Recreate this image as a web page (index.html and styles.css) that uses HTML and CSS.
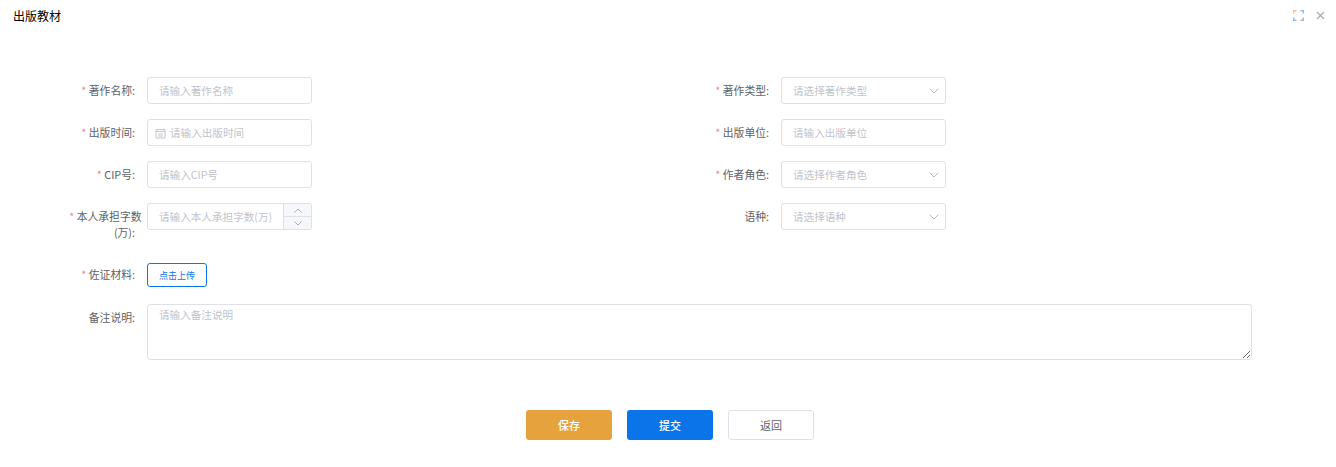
FILE: index.html
```html
<!DOCTYPE html>
<html lang="zh-CN">
<head>
<meta charset="utf-8">
<title>出版教材</title>
<link rel="stylesheet" href="styles.css">
</head>
<body>
<div class="dialog">
  <header class="head">
    <span class="title">出版教材</span>
    <div class="tools">
      <svg class="ico-full" viewBox="0 0 11 11" width="11" height="11" fill="none" stroke-width="1.4">
        <path d="M.7 3.500V.7h2.800" stroke="#f4c28c"/><path d="M7.500.7h2.800v2.800" stroke="#8fbdf0"/>
        <path d="M.7 7.500v2.800h2.800" stroke="#8fbdf0"/><path d="M7.500 10.300h2.800V7.500" stroke="#aeb4c2"/>
      </svg>
      <svg class="ico-close" viewBox="0 0 9 9" width="9" height="9" fill="none" stroke="#a9adb6" stroke-width="1.3"><path d="M1 1l7 7M8 1L1 8"/></svg>
    </div>
  </header>

  <form class="form">
    <div class="grid">
      <div class="item"><label class="lab"><i>*</i> 著作名称:</label><input class="ctl" placeholder="请输入著作名称"></div>
      <div class="item"><label class="lab"><i>*</i> 著作类型:</label>
        <div class="ctl select"><span>请选择著作类型</span><svg class="arrow" viewBox="0 0 10 6" width="10" height="6" fill="none" stroke="#b9bcc4"><path d="M.7.7L5 5l4.300-4.300"/></svg></div></div>

      <div class="item"><label class="lab"><i>*</i> 出版时间:</label>
        <div class="ctl date">
          <svg viewBox="0 0 11 11" width="11" height="11" fill="none" stroke="#c0c4cc"><path d="M1 1.500h9V10H1zM1 3.500h9M3 6h5M3 8h5"/></svg>
          <span>请输入出版时间</span></div></div>
      <div class="item"><label class="lab"><i>*</i> 出版单位:</label><input class="ctl" placeholder="请输入出版单位"></div>

      <div class="item"><label class="lab"><i>*</i> CIP号:</label><input class="ctl" placeholder="请输入CIP号"></div>
      <div class="item"><label class="lab"><i>*</i> 作者角色:</label>
        <div class="ctl select"><span>请选择作者角色</span><svg class="arrow" viewBox="0 0 10 6" width="10" height="6" fill="none" stroke="#b9bcc4"><path d="M.7.7L5 5l4.300-4.300"/></svg></div></div>

      <div class="item tall"><label class="lab"><span class="over"><i>*</i> 本人承担字数</span><span class="rest">(万):</span></label>
        <div class="ctl number"><input class="num-in" placeholder="请输入本人承担字数(万)">
          <div class="steps">
            <span><svg viewBox="0 0 8 5" width="8" height="5" fill="none" stroke="#a9adb6"><path d="M.5 4.500L4 1l3.500 3.500"/></svg></span>
            <span><svg viewBox="0 0 8 5" width="8" height="5" fill="none" stroke="#a9adb6"><path d="M.5.5L4 4 7.500.5"/></svg></span>
          </div></div></div>
      <div class="item tall"><label class="lab lab-one">语种:</label>
        <div class="ctl select"><span>请选择语种</span><svg class="arrow" viewBox="0 0 10 6" width="10" height="6" fill="none" stroke="#b9bcc4"><path d="M.7.7L5 5l4.300-4.300"/></svg></div></div>
    </div>

    <div class="item upload"><label class="lab"><i>*</i> 佐证材料:</label><button type="button" class="up-btn">点击上传</button></div>
    <div class="item note"><label class="lab">备注说明:</label><textarea class="area" placeholder="请输入备注说明"></textarea></div>

    <div class="actions">
      <button type="button" class="btn save">保存</button>
      <button type="button" class="btn submit">提交</button>
      <button type="button" class="btn back">返回</button>
    </div>
  </form>
</div>
</body>
</html>
```
FILE: styles.css
```css
* { box-sizing: border-box; }
html, body { margin: 0; height: 100%; background: #fff; }
body { font-family: "Noto Sans CJK SC", "Noto Sans", sans-serif; font-size: 10.6px; color: #606266; overflow: hidden; }
.dialog { height: 467px; display: flex; flex-direction: column; }
.head { height: 77px; padding: 8px 11px 0 13px; display: flex; justify-content: space-between; align-items: flex-start; flex: none; }
.title { font-size: 12px; line-height: 16px; color: #000; }
.tools { display: flex; align-items: center; gap: 12px; height: 14px; }
.form { padding-left: 27px; display: flex; flex-direction: column; }
.grid { display: grid; grid-template-columns: 634px 634px; row-gap: 15px; }
.item { display: flex; align-items: flex-start; }
.lab { width: 120px; flex: none; padding-right: 12px; text-align: right; font-size: 10.8px; line-height: 27px; color: #606266; }
.lab i { font-style: normal; color: #f78989; }
.tall .lab { line-height: 16px; padding-top: 5px; }
.tall .lab-one { line-height: 27px; padding-top: 0; }
.over, .rest { display: block; white-space: nowrap; }
.over { margin-right: -6.500px; }
.ctl { width: 165px; height: 27px; border: 1px solid #dfe1e9; border-radius: 3px; background: #fff; padding: 0 11px; font: inherit; color: #606266; display: flex; align-items: center; outline: none; }
.ctl span, .ctl::placeholder, .num-in::placeholder, .area::placeholder { color: #c0c4cc; opacity: 1; }
.select { justify-content: space-between; padding-right: 6px; }
.date { padding-left: 7px; gap: 4px; }
.date svg { margin-top: 2px; }
.number { padding: 0; overflow: hidden; }
.num-in { flex: 1; min-width: 0; border: 0; outline: 0; height: 100%; padding: 0 0 0 11px; font: inherit; background: transparent; }
.steps { width: 28px; height: 100%; flex: none; display: flex; flex-direction: column; border-left: 1px solid #dfe1e9; background: #f5f7fa; }
.steps span { flex: 1; display: flex; align-items: center; justify-content: center; }
.steps span + span { border-top: 1px solid #dfe1e9; }
.upload { margin-top: 23px; height: 24px; }
.upload .lab { line-height: 22px; }
.up-btn { width: 60px; height: 24px; padding: 0; border: 1px solid #0a74e8; border-radius: 3px; background: #fff; color: #0a74e8; font: inherit; font-size: 9px; }
.note { margin-top: 17px; }
.note .lab { line-height: 26px; }
.area { display: block; width: 1105px; height: 56px; padding: 1px 11px; border: 1px solid #dfe1e9; border-radius: 3px; font: inherit; line-height: 17px; outline: none; }
.actions { margin: 50px 0 0 499px; display: flex; gap: 15px; }
.btn { width: 86px; height: 30px; padding: 0; border: 1px solid transparent; border-radius: 3px; font: inherit; font-size: 11px; font-weight: 500; color: #fff; }
.save { background: #e6a23c; }
.submit { background: #0a74e8; }
.back { background: #fff; border-color: #dfe1e9; color: #606266; font-weight: 400; }
```
